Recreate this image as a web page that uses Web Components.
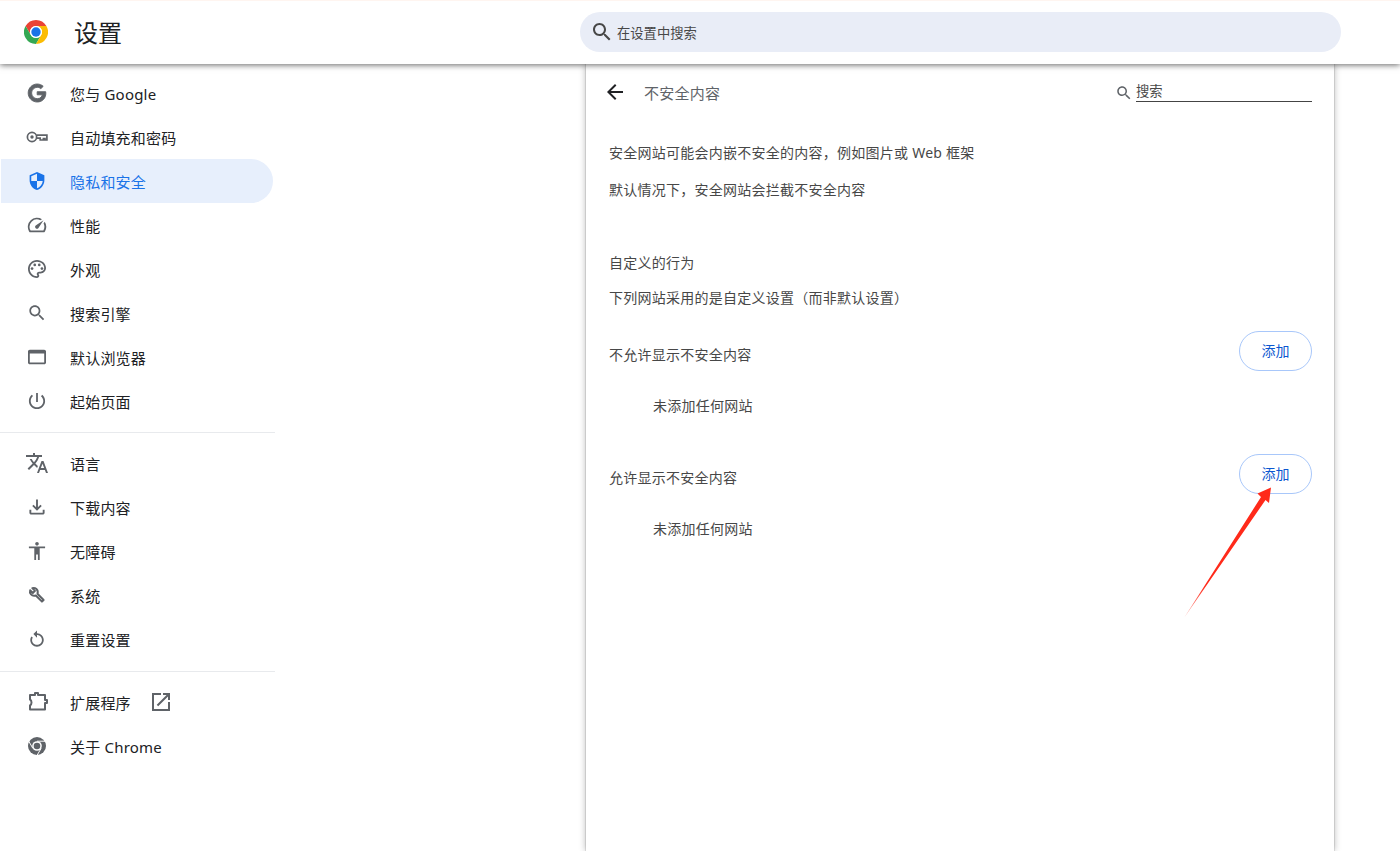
<!DOCTYPE html>
<html lang="zh-CN">
<head>
<meta charset="utf-8">
<title>设置</title>
<style>
  html, body { margin: 0; height: 851px; overflow: hidden; background: #fff; }
  body { font-family: "Noto Sans", "Noto Sans CJK SC", sans-serif; color: #1f1f1f; position: relative; }
</style>
</head>
<body>
<settings-app>
  <settings-header slot="header"></settings-header>
  <settings-sidebar slot="side">
    <nav-item icon="google">您与 Google</nav-item>
    <nav-item icon="key">自动填充和密码</nav-item>
    <nav-item icon="shield" selected>隐私和安全</nav-item>
    <nav-item icon="speed">性能</nav-item>
    <nav-item icon="palette">外观</nav-item>
    <nav-item icon="search">搜索引擎</nav-item>
    <nav-item icon="browser">默认浏览器</nav-item>
    <nav-item icon="power">起始页面</nav-item>
    <nav-divider style="margin-bottom:8px"></nav-divider>
    <nav-item icon="translate">语言</nav-item>
    <nav-item icon="download">下载内容</nav-item>
    <nav-item icon="accessibility">无障碍</nav-item>
    <nav-item icon="wrench">系统</nav-item>
    <nav-item icon="restore">重置设置</nav-item>
    <nav-divider style="margin-top:10px; margin-bottom:8px"></nav-divider>
    <nav-item icon="extension" external>扩展程序</nav-item>
    <nav-item icon="chrome">关于 Chrome</nav-item>
  </settings-sidebar>
  <content-card slot="main">
    <sub-header>不安全内容</sub-header>
    <text-row style="--h:37px; margin-top:11px">安全网站可能会内嵌不安全的内容，例如图片或 Web 框架</text-row>
    <text-row style="--h:37px">默认情况下，安全网站会拦截不安全内容</text-row>
    <text-row style="--h:35px; margin-top:37px">自定义的行为</text-row>
    <text-row style="--h:35px">下列网站采用的是自定义设置（而非默认设置）</text-row>
    <site-list style="margin-top:17px">不允许显示不安全内容</site-list>
    <site-list style="margin-top:29px">允许显示不安全内容</site-list>
  </content-card>
</settings-app>
<pointer-arrow></pointer-arrow>

<script>
const ICONS = {
  search: '<path d="M15.5 14h-.79l-.28-.27C15.41 12.59 16 11.11 16 9.5 16 5.91 13.09 3 9.5 3S3 5.91 3 9.5 5.91 16 9.5 16c1.61 0 3.09-.59 4.23-1.57l.27.28v.79l5 4.99L20.49 19l-4.99-5zm-6 0C7.01 14 5 11.99 5 9.5S7.01 5 9.5 5 14 7.01 14 9.5 11.99 14 9.5 14z"/>',
  google: '<path transform="translate(3 3) scale(.75)" stroke="currentColor" stroke-width="1.2" d="M12.24 10.285V14.4h6.806c-.275 1.765-2.056 5.174-6.806 5.174-4.095 0-7.439-3.389-7.439-7.574s3.345-7.574 7.439-7.574c2.33 0 3.891.989 4.785 1.849l3.254-3.138C18.189 1.186 15.479 0 12.24 0c-6.635 0-12 5.365-12 12s5.365 12 12 12c6.926 0 11.52-4.869 11.52-11.726 0-.788-.085-1.39-.189-1.989H12.24z"/>',
  key: '<g fill="none" stroke="currentColor" stroke-width="1.7"><circle cx="7" cy="12" r="4.6"/><path d="M11.5 10.2H21.9V15H20v-1.4h-1.6V15h-3.200v-1.800h-3.700"/></g><circle cx="7" cy="12" r="1.700"/>',
  shield: '<path d="M12 1 3 5v6c0 5.55 3.84 10.74 9 12 5.16-1.26 9-6.45 9-12V5l-9-4zm0 10.99h7c-.53 4.12-3.28 7.79-7 8.94V12H5V6.3l7-3.11v8.8z"/>',
  speed: '<path d="M20.38 8.57l-1.23 1.85a8 8 0 0 1-.22 7.58H5.07A8 8 0 0 1 15.58 6.85l1.85-1.23A10 10 0 0 0 3.35 19a2 2 0 0 0 1.72 1h13.85a2 2 0 0 0 1.74-1 10 10 0 0 0-.27-10.44zm-9.79 6.84a2 2 0 0 0 2.83 0l5.66-8.49-8.49 5.66a2 2 0 0 0 0 2.83z"/>',
  palette: '<path d="M12 22C6.49 22 2 17.51 2 12S6.49 2 12 2s10 4.04 10 9c0 3.31-2.69 6-6 6h-1.77c-.28 0-.5.22-.5.5 0 .12.05.23.13.33.41.47.64 1.06.64 1.67 0 1.38-1.12 2.5-2.5 2.5zm0-18c-4.41 0-8 3.59-8 8s3.59 8 8 8c.28 0 .5-.22.5-.5 0-.16-.08-.28-.14-.35-.41-.46-.63-1.05-.63-1.65 0-1.38 1.12-2.5 2.5-2.5H16c2.21 0 4-1.79 4-4 0-3.86-3.59-7-8-7z"/><circle cx="6.5" cy="11.5" r="1.5"/><circle cx="9.5" cy="7.5" r="1.5"/><circle cx="14.5" cy="7.5" r="1.5"/><circle cx="17.5" cy="11.5" r="1.5"/>',
  browser: '<path d="M20 4H4c-1.11 0-2 .9-2 2v12c0 1.1.89 2 2 2h16c1.1 0 2-.9 2-2V6c0-1.1-.89-2-2-2zm0 14H4V8h16v10z"/>',
  power: '<path d="M13 3h-2v10h2V3zm4.83 2.17l-1.42 1.42C17.99 7.86 19 9.81 19 12c0 3.87-3.13 7-7 7s-7-3.13-7-7c0-2.19 1.01-4.14 2.58-5.42L6.17 5.17C4.23 6.82 3 9.26 3 12c0 4.97 4.03 9 9 9s9-4.03 9-9c0-2.74-1.23-5.18-3.17-6.83z"/>',
  translate: '<path d="M12.87 15.07l-2.54-2.51.03-.03c1.74-1.94 2.98-4.17 3.71-6.53H17V4h-7V2H8v2H1v1.99h11.17C11.5 7.92 10.44 9.75 9 11.35 8.07 10.32 7.3 9.19 6.69 8h-2c.73 1.63 1.73 3.17 2.98 4.56l-5.09 5.02L4 19l5-5 3.11 3.11.76-2.04zM18.5 10h-2L12 22h2l1.12-3h4.75L21 22h2l-4.5-12zm-2.62 7l1.62-4.33L19.12 17h-3.24z"/>',
  download: '<path d="M18 15v3H6v-3H4v3c0 1.1.9 2 2 2h12c1.1 0 2-.9 2-2v-3h-2zm-1-4l-1.41-1.41L13 12.17V4h-2v8.17L8.41 9.59 7 11l5 5 5-5z"/>',
  accessibility: '<path d="M12 2c1.1 0 2 .9 2 2s-.9 2-2 2-2-.9-2-2 .9-2 2-2zm9 7h-6v13h-2v-6h-2v6H9V9H3V7h18v2z"/>',
  wrench: '<g fill="none" stroke="currentColor" stroke-width="2.400" stroke-linejoin="round"><path d="M20.300 18.200 12.600 10.500C13.400 8.100 12.800 5.900 11.300 4.500 9.900 3.200 7.900 2.800 6.100 3.400L9.500 6.800 6.800 9.500 3.400 6.100C2.800 7.900 3.200 9.900 4.500 11.300 5.900 12.800 8.100 13.400 10.500 12.600L18.200 20.300 Z"/></g>',
  restore: '<path d="M12 5.500V2.500L8 6.500l4 4V7.500c3 0 5.500 2.400 5.500 5.500s-2.500 5.500-5.500 5.500-5.500-2.500-5.500-5.500c0-1 .3-2 .8-2.800L5.800 9.200C5 10.300 4.500 11.600 4.500 13c0 4.100 3.400 7.500 7.500 7.500s7.500-3.400 7.500-7.500-3.400-7.500-7.500-7.500z"/>',
  extension: '<path fill="none" stroke="currentColor" stroke-width="2" stroke-linejoin="round" d="M5 5H10V3H13V5H20V10H22V13H20V19.500H5V15.500C7 14.500 7 10.500 5 9.500Z"/>',
  external: '<path d="M19 19H5V5h7V3H3v18h18v-9h-2v7zM14 3v2h3.590l-9.830 9.830 1.410 1.410L19 6.410V10h2V3h-7z"/>',
  chrome: '<g transform="translate(3 3) scale(.75)"><circle cx="12" cy="12" r="12"/><circle cx="12" cy="12" r="6.400" fill="#fff"/><path d="M12 5.600H23M6.500 15.200 1 5.700M17.500 15.200 12 24.500" stroke="#fff" stroke-width="1.300" fill="none"/><circle cx="12" cy="12" r="4.400"/></g>',
  back: '<path d="M20 11H7.830l5.590-5.590L12 4l-8 8 8 8 1.410-1.410L7.830 13H20v-2z"/>'
};
// drawn smaller than their 24px box in the sidebar
const ICON_SCALE = { search: .85, shield: .82, speed: .92, palette: .9, browser: .9, power: .9, download: .95, accessibility: .9, wrench: .8, restore: .9 };

class SIcon extends HTMLElement {
  connectedCallback() {
    const size = this.getAttribute("size") || 24;
    const scale = this.getAttribute("scale") || 1;
    this.attachShadow({ mode: "open" });
    this.shadowRoot.innerHTML = `
      <style>
        :host { display: block; flex: none; width: ${size}px; height: ${size}px; }
        svg { display: block; width: 100%; height: 100%; fill: currentColor; transform: scale(${scale}); }
      </style>
      <svg viewBox="0 0 24 24" aria-hidden="true">${ICONS[this.getAttribute("name")]}</svg>`;
  }
}
customElements.define("s-icon", SIcon);

class SettingsApp extends HTMLElement {
  connectedCallback() {
    this.attachShadow({ mode: "open" });
    this.shadowRoot.innerHTML = `
      <style>
        :host { display: flex; flex-direction: column; height: 851px; overflow: hidden; }
        .body { display: grid; grid-template-columns: 275px 1fr; flex: 1; min-height: 0; }
        .main { padding-left: 311px; }
      </style>
      <slot name="header"></slot>
      <div class="body">
        <slot name="side"></slot>
        <div class="main"><slot name="main"></slot></div>
      </div>`;
  }
}
customElements.define("settings-app", SettingsApp);

class SettingsHeader extends HTMLElement {
  connectedCallback() {
    this.attachShadow({ mode: "open" });
    this.shadowRoot.innerHTML = `
      <style>
        :host {
          display: flex; align-items: center; flex: none; box-sizing: border-box;
          height: 64px; padding: 0 0 1px 24px; background: #fff;
          border-top: 1px solid #fff5f0;
          box-shadow: 0 1px 6px rgba(0,0,0,.6);
          position: relative; z-index: 2;
        }
        .logo { width: 24px; height: 24px; flex: none; display: block; margin-top: -1px; }
        h1 { margin: 2px 0 0 26px; width: 506px; font-size: 24px; font-weight: 400; color: #202124; line-height: 32px; }
        .search {
          display: flex; align-items: center; gap: 3px; box-sizing: border-box;
          width: 761px; height: 40px; padding-left: 10px; border-radius: 20px;
          background: #e9edf7; color: #474747; font-size: 13.3px;
        }
      </style>
      <svg class="logo" viewBox="0 0 24 24" aria-hidden="true">
        <path fill="#ea4335" d="M12 0A12 12 0 0 0 1.600 6l5.200 9A6 6 0 0 1 12 6h10.400A12 12 0 0 0 12 0z"/>
        <path fill="#34a853" d="M1.600 6A12 12 0 0 0 12 24l5.200-9a6 6 0 0 1-10.400 0z"/>
        <path fill="#fbbc04" d="M22.400 6H12a6 6 0 0 1 5.200 9L12 24A12 12 0 0 0 22.400 6z"/>
        <circle cx="12" cy="12" r="6" fill="#fff"/>
        <circle cx="12" cy="12" r="4.700" fill="#1a73e8"/>
      </svg>
      <h1>设置</h1>
      <div class="search"><s-icon name="search"></s-icon><span>在设置中搜索</span></div>`;
  }
}
customElements.define("settings-header", SettingsHeader);

class SettingsSidebar extends HTMLElement {
  connectedCallback() {
    this.attachShadow({ mode: "open" });
    this.shadowRoot.innerHTML = `
      <style>
        :host { display: block; padding-top: 7px; }
      </style>
      <slot></slot>`;
  }
}
customElements.define("settings-sidebar", SettingsSidebar);

class NavItem extends HTMLElement {
  connectedCallback() {
    const selected = this.hasAttribute("selected");
    const name = this.getAttribute("icon");
    const external = this.hasAttribute("external")
      ? '<s-icon class="ext" name="external"></s-icon>' : "";
    this.attachShadow({ mode: "open" });
    this.shadowRoot.innerHTML = `
      <style>
        :host {
          display: flex; align-items: center; box-sizing: border-box;
          width: 272px; height: 44px; margin-left: 1px; padding-left: 24px;
          border-radius: 0 22px 22px 0; font-size: 15px; letter-spacing: .2px;
          color: ${selected ? "#1a73e8" : "#202124"};
          background: ${selected ? "#e7effc" : "transparent"};
        }
        .icon { color: ${selected ? "#1a73e8" : "#5f6368"}; margin-right: 21px; }
        .ext { color: #5f6368; margin-left: 18px; }
        .label { padding-top: 1px; }
      </style>
      <s-icon class="icon" name="${name}" scale="${ICON_SCALE[name] || 1}"></s-icon>
      <span class="label"><slot></slot></span>${external}`;
  }
}
customElements.define("nav-item", NavItem);

class NavDivider extends HTMLElement {
  connectedCallback() {
    this.attachShadow({ mode: "open" });
    this.shadowRoot.innerHTML = `
      <style>
        :host { display: block; height: 1px; margin: 9px 0; width: 275px; background: #e8eaed; }
      </style>`;
  }
}
customElements.define("nav-divider", NavDivider);

class ContentCard extends HTMLElement {
  connectedCallback() {
    this.attachShadow({ mode: "open" });
    this.shadowRoot.innerHTML = `
      <style>
        :host {
          display: block; box-sizing: border-box; width: 748px; height: 787px;
          padding: 0 22px 0 23px; background: #fff;
          box-shadow: 0 0 1px rgba(0,0,0,.5), 0 0 7px rgba(0,0,0,.3);
          color: #474747; font-size: 14px; letter-spacing: .25px;
        }
      </style>
      <slot></slot>`;
  }
}
customElements.define("content-card", ContentCard);

class SubHeader extends HTMLElement {
  connectedCallback() {
    this.attachShadow({ mode: "open" });
    this.shadowRoot.innerHTML = `
      <style>
        :host { display: flex; align-items: center; height: 58px; }
        .back { color: #202124; margin: -2px 0 0 -6px; }
        .title { flex: 1; margin: -2px 0 0 17px; font-size: 15px; color: #5f6368; }
        .find { display: flex; align-items: center; gap: 3px; color: #5f6368; }
        .field {
          box-sizing: border-box; width: 176px; height: 18px; border-bottom: 1px solid #444;
          font-size: 13.3px; line-height: 14px; letter-spacing: 0; color: #474747;
        }
      </style>
      <s-icon class="back" name="back"></s-icon>
      <span class="title"><slot></slot></span>
      <div class="find"><s-icon name="search" size="18"></s-icon><div class="field">搜索</div></div>`;
  }
}
customElements.define("sub-header", SubHeader);

class TextRow extends HTMLElement {
  connectedCallback() {
    this.attachShadow({ mode: "open" });
    this.shadowRoot.innerHTML = `
      <style>
        :host { display: flex; align-items: center; height: var(--h, 37px); }
      </style>
      <slot></slot>`;
  }
}
customElements.define("text-row", TextRow);

class AddButton extends HTMLElement {
  connectedCallback() {
    this.attachShadow({ mode: "open" });
    this.shadowRoot.innerHTML = `
      <style>
        :host {
          display: flex; align-items: center; justify-content: center; box-sizing: border-box;
          width: 73px; height: 40px; padding-bottom: 2px; border: 1px solid #a8c7fa; border-radius: 20px;
          color: #0b57d0; font-size: 14px; letter-spacing: 0;
        }
      </style>
      <slot></slot>`;
  }
}
customElements.define("add-button", AddButton);

class SiteList extends HTMLElement {
  connectedCallback() {
    this.attachShadow({ mode: "open" });
    this.shadowRoot.innerHTML = `
      <style>
        :host { display: block; }
        .head { display: flex; align-items: center; justify-content: space-between; height: 40px; }
        .label { padding-top: 6px; }
        .empty { display: flex; align-items: center; height: 40px; margin-top: 14px; padding-left: 44px; }
      </style>
      <div class="head"><span class="label"><slot></slot></span><add-button>添加</add-button></div>
      <div class="empty">未添加任何网站</div>`;
  }
}
customElements.define("site-list", SiteList);

class PointerArrow extends HTMLElement {
  connectedCallback() {
    this.attachShadow({ mode: "open" });
    this.shadowRoot.innerHTML = `
      <style>
        :host { position: absolute; left: 0; top: 0; z-index: 3; pointer-events: none; }
        svg { display: block; position: absolute; left: 1180px; top: 484px; }
      </style>
      <svg width="96" height="138" viewBox="1180 484 96 138" aria-hidden="true">
        <defs>
          <linearGradient id="fade" gradientUnits="userSpaceOnUse" x1="1184" y1="618" x2="1205" y2="586">
            <stop offset="0" stop-color="#ff2a1a" stop-opacity=".4"/>
            <stop offset="1" stop-color="#ff2a1a"/>
          </linearGradient>
        </defs>
        <path fill="url(#fade)" d="M1184 618 L1261 497 L1257.500 493.500 L1271 487.500 L1269 503 L1265.500 500 Z"/>
      </svg>`;
  }
}
customElements.define("pointer-arrow", PointerArrow);
</script>
</body>
</html>
